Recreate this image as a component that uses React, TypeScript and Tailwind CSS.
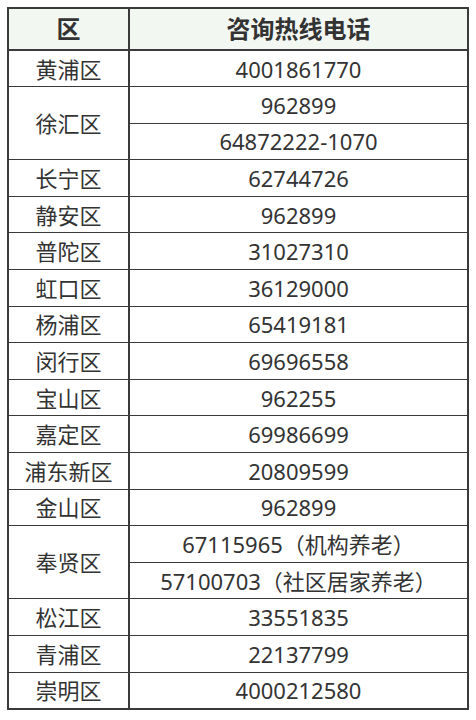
const rows: { district: string; phones: string[] }[] = [
  { district: "黄浦区", phones: ["4001861770"] },
  { district: "徐汇区", phones: ["962899", "64872222-1070"] },
  { district: "长宁区", phones: ["62744726"] },
  { district: "静安区", phones: ["962899"] },
  { district: "普陀区", phones: ["31027310"] },
  { district: "虹口区", phones: ["36129000"] },
  { district: "杨浦区", phones: ["65419181"] },
  { district: "闵行区", phones: ["69696558"] },
  { district: "宝山区", phones: ["962255"] },
  { district: "嘉定区", phones: ["69986699"] },
  { district: "浦东新区", phones: ["20809599"] },
  { district: "金山区", phones: ["962899"] },
  { district: "奉贤区", phones: ["67115965（机构养老）", "57100703（社区居家养老）"] },
  { district: "松江区", phones: ["33551835"] },
  { district: "青浦区", phones: ["22137799"] },
  { district: "崇明区", phones: ["4000212580"] },
];

export default function App() {
  return (
    <div
      className="min-h-[720px] w-[476px] bg-white pl-[7px] pt-[7px]"
      style={{ fontFamily: '"Noto Sans", "Noto Sans CJK SC", sans-serif' }}
    >
      <table className="w-[462px] border-collapse border-2 border-[#3a3a3a] text-[22px] text-[#333]">
        <colgroup>
          <col className="w-[121px]" />
          <col />
        </colgroup>
        <thead>
          <tr className="h-[42px] bg-[#f2f7f2]">
            <th className="border-2 border-[#3a3a3a] p-0 text-center text-[24px] font-bold leading-none">区</th>
            <th className="border-2 border-[#3a3a3a] p-0 text-center text-[24px] font-bold leading-none">咨询热线电话</th>
          </tr>
        </thead>
        <tbody>
          {rows.map((r) =>
            r.phones.map((p, i) => (
              <tr key={r.district + i} className="h-[36.6px]">
                {i === 0 && (
                  <td
                    rowSpan={r.phones.length}
                    className="border border-[#3a3a3a] border-r-2 p-0 text-center leading-none"
                  >
                    {r.district}
                  </td>
                )}
                <td className="border border-[#3a3a3a] p-0 text-center leading-none">{p}</td>
              </tr>
            ))
          )}
        </tbody>
      </table>
    </div>
  );
}
